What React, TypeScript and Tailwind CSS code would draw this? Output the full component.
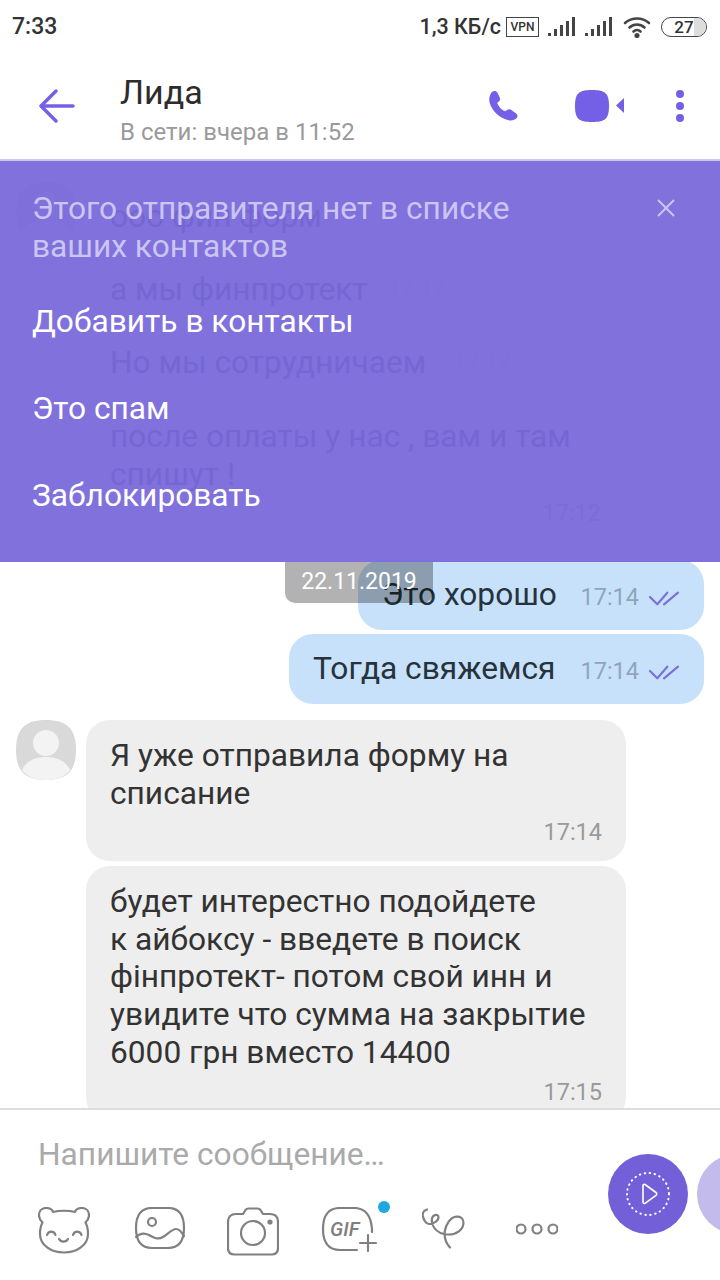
import type { ReactElement, ReactNode } from 'react'
import { X } from 'lucide-react'

const purple = '#7360e6'

function Ticks(): ReactElement {
  return (
    <svg width="32" height="20" viewBox="0 0 32 20" fill="none" stroke="#7d70d8" strokeWidth="2.200" strokeLinecap="round" strokeLinejoin="round">
      <path d="M2 11l7.300 7.300L19.300 6.700" />
      <path d="M16 18.300L30 6.700" />
    </svg>
  )
}

function Outgoing({ text, className }: { text: string; className: string }): ReactElement {
  return (
    <div className={`flex h-[70px] items-center self-end rounded-[24px] bg-[#c7e1fb] pl-6 pr-6 text-[31.7px] text-[#26323c] ${className}`}>
      <span>{text}</span>
      <span className="ml-auto mt-[5px] text-[23.5px] text-[#8fa5bc]">17:14</span>
      <span className="ml-[9px] mt-[2px]">
        <Ticks />
      </span>
    </div>
  )
}

function Avatar(): ReactElement {
  return (
    <svg width="60" height="60" viewBox="0 0 60 60" className="shrink-0">
      <path d="M30 0C50 0 60 8 60 30S50 60 30 60 0 52 0 30 10 0 30 0z" fill="#d9d9d9" />
      <circle cx="30" cy="23" r="13" fill="#f3f3f3" />
      <path d="M6 50c4-9 13-13 24-13s20 4 24 13c-5 7-14 10-24 10S11 57 6 50z" fill="#f3f3f3" />
    </svg>
  )
}

function Incoming({ lines, time, avatar, width, height }: { lines: string[]; time?: string; avatar?: boolean; width: string; height: string }): ReactElement {
  return (
    <div className="flex gap-[10px] pl-4">
      {avatar ? <Avatar /> : <div className="w-[60px] shrink-0" />}
      <div className={`rounded-[24px] bg-[#eeeeee] px-6 pt-[17px] text-[31.7px] leading-[37.7px] text-[#333333] ${width} ${height}`}>
        {lines.map((line) => (
          <p key={line} className="whitespace-nowrap">
            {line}
          </p>
        ))}
        {time && <p className="mt-[1px] text-right text-[23.5px] leading-[38px] text-[#9a9a9a]">{time}</p>}
      </div>
    </div>
  )
}

function Ghost({ text, width }: { text: string; width: string }): ReactElement {
  return (
    <div className="flex gap-[10px] pl-4">
      <div className="w-[60px] shrink-0" />
      <div className={`flex h-[70px] items-center justify-between rounded-[24px] bg-[#eeeeee] px-6 text-[31.7px] text-[#333333] ${width}`}>
        <span className="whitespace-nowrap">{text}</span>
        <span className="text-[23.5px] text-[#dcdcdc]">17:12</span>
      </div>
    </div>
  )
}

function ToolIcon({ className, children }: { className: string; children: ReactNode }): ReactElement {
  return (
    <svg viewBox="0 0 52 50" fill="none" stroke="#808080" strokeWidth="2.200" strokeLinecap="round" strokeLinejoin="round" className={`h-[50px] w-[52px] shrink-0 ${className}`}>
      {children}
    </svg>
  )
}

function StatusIcons(): ReactElement {
  return (
    <div className="flex items-center">
      <span className="text-[21.5px] font-medium text-[#333333]">1,3 КБ/с</span>
      <span className="ml-[5px] flex h-[20px] w-[33px] items-center justify-center border-[1.5px] border-[#444444] text-[12px] font-medium leading-none text-[#333333]">VPN</span>
      {[0, 1].map((i) => (
        <svg key={i} width="28" height="22" viewBox="0 0 28 22" fill="#444444" className="ml-[9px]">
          <rect x="0" y="17" width="3" height="3" />
          <rect x="6" y="13" width="3" height="7" />
          <rect x="12" y="9" width="3" height="11" />
          <rect x="18" y="5" width="3" height="15" />
          <rect x="24" y="1" width="3" height="19" />
        </svg>
      ))}
      <svg width="28" height="22" viewBox="0 0 28 22" fill="none" stroke="#444444" strokeWidth="2.600" strokeLinecap="round" className="ml-[10px]">
        <path d="M2 7c7-6 17-6 24 0" />
        <path d="M6.500 11.500c4.500-4 10.500-4 15 0" />
        <path d="M10.500 15.500c2-2 5-2 7 0" />
        <circle cx="14" cy="19.500" r="1.300" fill="#444444" />
      </svg>
      <span className="relative ml-[10px] flex h-[20px] w-[46px] items-center justify-center overflow-hidden rounded-full border-[1.5px] border-[#444444] text-[17px] font-medium leading-none text-[#333333]">
        <span className="absolute inset-y-0 right-0 w-[12px] bg-[#dddddd]" />
        <span className="relative">27</span>
      </span>
    </div>
  )
}

export default function App(): ReactElement {
  return (
    <div className="flex h-[1280px] w-[720px] flex-col overflow-hidden bg-white font-['Roboto',sans-serif]">
      <div className="flex h-[54px] shrink-0 items-center justify-between pl-3 pr-[13px]">
        <span className="text-[23px] font-medium text-[#333333]">7:33</span>
        <StatusIcons />
      </div>

      <header className="flex h-[107px] shrink-0 items-start border-b-2 border-[#c9c6e6]">
        <svg width="36" height="36" viewBox="0 0 36 36" fill="none" stroke={purple} strokeWidth="3.400" strokeLinecap="round" strokeLinejoin="round" className="ml-[39px] mt-[34px] shrink-0">
          <path d="M34 18H3" />
          <path d="M17 3L2 18l15 15" />
        </svg>
        <div className="ml-[45px] mt-[16px] w-[355px] shrink-0">
          <p className="text-[34px] leading-[44px] text-[#2c2c2c]">Лида</p>
          <p className="mt-[2px] text-[24px] leading-[32px] text-[#9a9a9a]">В сети: вчера в 11:52</p>
        </div>
        <svg width="32" height="32" viewBox="0 0 34 36" fill={purple} preserveAspectRatio="none" className="ml-[13px] mt-[36px] shrink-0">
          <path d="M4 2.500C6 .500 9 1 10 3l2.500 5.500c.8 1.700.2 3.300-1 4.400l-1.800 1.600c1.500 4 4.500 7.500 8.500 9.500l2.200-1.500c1.400-1 3.200-1 4.500.1l5 3.800c1.800 1.400 1.900 3.800.3 5.400-2 2-5 3-8.200 2.200C12 31.500 4.500 23.500 1.800 14.500.8 10.500 1.500 5.500 4 2.500z" />
        </svg>
        <svg width="50" height="32" viewBox="0 0 50 32" fill={purple} className="ml-[55px] mt-[36px] shrink-0">
          <path d="M17 0C30 0 34 3 34 16S30 32 17 32 0 29 0 16 4 0 17 0z" />
          <path d="M49 8v15l-8-7.500z" />
        </svg>
        <svg width="8" height="32" viewBox="0 0 8 32" fill={purple} className="ml-[51px] mt-[36px] shrink-0">
          <circle cx="4" cy="4" r="4" />
          <circle cx="4" cy="16" r="4" />
          <circle cx="4" cy="28" r="4" />
        </svg>
      </header>

      <main className="relative flex min-h-0 flex-1 flex-col overflow-hidden pt-[21px]">
        <div className="flex flex-col gap-[3px]">
          <div className="flex gap-[10px] pl-4">
            <Avatar />
            <div className="flex h-[70px] w-[330px] items-center rounded-[24px] bg-[#eeeeee] px-6 text-[31.7px] text-[#333333]">ооо фин форм</div>
          </div>
          <Ghost text="а мы финпротект" width="w-[384px]" />
          <Ghost text="Но мы сотрудничаем" width="w-[449px]" />
          <Incoming lines={['после оплаты у нас , вам и там', 'спишут !']} time="17:12" width="w-[539px]" height="h-[137px]" />
        </div>

        <div className="mt-[22px] flex flex-col gap-[4px] pr-4">
          <Outgoing text="Это хорошо" className="w-[346px]" />
          <Outgoing text="Тогда свяжемся" className="w-[415px]" />
        </div>

        <div className="mt-[16px] flex flex-col gap-[5px]">
          <Incoming avatar lines={['Я уже отправила форму на', 'списание']} time="17:14" width="w-[540px]" height="h-[141px]" />
          <Incoming
            lines={['будет интерестно подойдете', 'к айбоксу - введете в поиск', 'фінпротект- потом свой инн и', 'увидите что сумма на закрытие', '6000 грн вместо 14400']}
            time="17:15"
            width="w-[540px]"
            height="h-[255px]"
          />
        </div>

        <div className="absolute inset-x-0 top-0 h-[401px] bg-[#7969db]/95 px-[32px] pt-[29px]">
          <div className="flex items-start justify-between">
            <p className="text-[31.7px] leading-[38px] text-[#cbc5f2]">
              Этого отправителя нет в списке
              <br />
              ваших контактов
            </p>
            <X className="mr-[7px] mt-[3px] h-[30px] w-[30px] text-[#cbc5f2]" strokeWidth={1.500} />
          </div>
          <ul className="mt-[12px] text-[31.7px] text-white">
            <li className="flex h-[87px] items-center">Добавить в контакты</li>
            <li className="flex h-[87px] items-center">Это спам</li>
            <li className="flex h-[87px] items-center">Заблокировать</li>
          </ul>
        </div>

        <div className="absolute left-[285px] top-[401px] flex h-[41px] w-[148px] items-center justify-center rounded-b-[10px] bg-black/30 text-[23px] text-white">
          22.11.2019
        </div>
      </main>

      <footer className="flex h-[172px] shrink-0 border-t-2 border-[#dddddd]">
        <div className="w-[608px] shrink-0 pl-[38px] pt-[26px]">
          <p className="text-[31.7px] leading-[38px] text-[#aaaaaa]">Напишите сообщение…</p>
          <div className="mt-[33px] flex items-start">
            <ToolIcon className="">
              <path d="M15 5C21 3.500 31 3.500 37 5 38 2 41 1 44 1c5 0 7 4 7 7.500 0 3.500-2 5.500-3.500 7 2 3.500 2.500 7.500 2.500 11.500 0 11-11 18.500-24 18.500S2 38 2 27c0-4 .5-8 2.500-11.500C3 14 1 12 1 8.500 1 5 3 1 8 1c3 0 6 1 7 4z" />
              <path d="M9 28c1.500-4.500 7-4.500 8.500 0M35 28c1.500-4.500 7-4.500 8.500 0M21 32c2 3.500 7 3.500 9 0" />
            </ToolIcon>
            <ToolIcon className="ml-[44px]">
              <path d="M18 1h16c11 0 16 7 16 20s-5 20-16 20H18C7 41 2 34 2 21S7 1 18 1z" />
              <circle cx="18" cy="15" r="4" />
              <path d="M2 30c4-4 9-4 13-2 5 3 9 5 14 2 5-3 9-8 13-8 4 0 6 4 8 7" />
            </ToolIcon>
            <ToolIcon className="ml-[41px]">
              <path d="M9 7h7l2.500-4c.7-1 1.500-1.500 3-1.500h9c1.500 0 2.300.5 3 1.500L36 7h7c5 0 8 3 8 8v26c0 4-2.500 6.500-6.500 6.500h-37C3.500 47.500 1 45 1 41V15c0-5 3-8 8-8z" />
              <circle cx="26" cy="26" r="12" />
              <circle cx="43" cy="15" r="1.500" fill="#808080" />
            </ToolIcon>
            <div className="relative ml-[43px] h-[50px] w-[56px] shrink-0">
              <svg width="56" height="50" viewBox="0 0 56 50" fill="none" stroke="#808080" strokeWidth="2.200" strokeLinecap="round" strokeLinejoin="round">
                <path d="M35 43H18C6 43 1 35 1 22S6 1 18 1h14c11 0 17 8 18 21v3" />
                <path d="M38 36h16M46 28v16" />
              </svg>
              <span className="absolute left-[8px] top-[10px] text-[20px] font-medium italic leading-[24px] text-[#808080]">GIF</span>
              <span className="absolute -top-[6px] left-[56px] h-[12px] w-[12px] rounded-full bg-[#1fa8e0]" />
            </div>
            <ToolIcon className="ml-[44px]">
              <path d="M5 2.500C2 3.500.5 6 .8 8.500 1.500 13 4 17 7 17c4 0 9.500-3 9.500-6.500 0-2.500-2.500-3.500-4.500-2-3 2-3 7.500 0 12 3 4.500 9 7 15 7 7 0 14.500-4.500 14.500-12 0-4.500-3.500-6-7-5.800C28 10 24 18 22.800 24c-.8 6 1.200 12 5.200 16.500" />
            </ToolIcon>
            <svg width="42" height="14" viewBox="0 0 42 14" fill="none" stroke="#808080" strokeWidth="2.200" className="ml-[42px] mt-[15px] shrink-0">
              <circle cx="5" cy="7" r="4.500" />
              <circle cx="21" cy="7" r="4.500" />
              <circle cx="37" cy="7" r="4.500" />
            </svg>
          </div>
        </div>
        <div className="mt-[44px] flex h-[80px] w-[80px] shrink-0 items-center justify-center rounded-full bg-[#7360d8]">
          <svg width="48" height="48" viewBox="0 0 48 48" fill="none" stroke="#ffffff" strokeWidth="2" strokeLinecap="round" strokeLinejoin="round">
            <circle cx="24" cy="24" r="21" strokeDasharray="0.5 4.500" />
            <path d="M19 15.500c0-1 1-1.500 2-1l11 8c1 .7 1 2 0 2.800l-11 8c-1 .6-2 0-2-1z" strokeWidth="1.600" />
          </svg>
        </div>
        <div className="ml-[9px] mt-[44px] h-[80px] w-[80px] shrink-0 rounded-full bg-[#c3bbec]" />
      </footer>
    </div>
  )
}
